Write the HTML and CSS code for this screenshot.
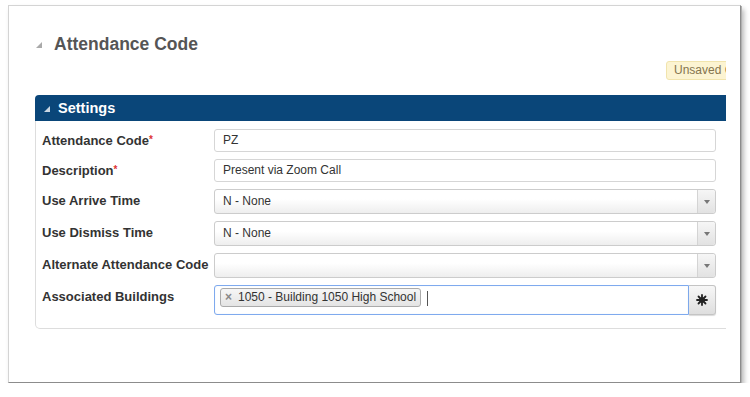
FILE: index.html
```html
<!DOCTYPE html>
<html lang="en-US">

<head>
    <meta charset="utf-8">
    <title>Attendance Code</title>
    <link rel="stylesheet" href="styles.css">
</head>

<body>
    <div class="window">
        <div class="clip">
            <div class="content">
                <h1 class="page-title">
                    <svg class="tri" width="6" height="6" viewBox="0 0 6 6"><polygon points="6,0 6,6 0,6" fill="#aaa"/></svg>
                    Attendance Code
                </h1>
                <div class="badge-row">
                    <span class="badge">Unsaved Changes</span>
                </div>

                <section class="panel">
                    <div class="panel-head">
                        <svg class="tri" width="6" height="6" viewBox="0 0 6 6"><polygon points="6,0 6,6 0,6" fill="#c9d6e3"/></svg>
                        Settings
                    </div>
                    <div class="panel-body">
                        <div class="row">
                            <label>Attendance Code<span class="req">*</span></label>
                            <div class="field text">PZ</div>
                        </div>
                        <div class="row">
                            <label>Description<span class="req">*</span></label>
                            <div class="field text">Present via Zoom Call</div>
                        </div>
                        <div class="row">
                            <label>Use Arrive Time</label>
                            <div class="field select">
                                <span class="value">N - None</span>
                                <span class="arrow"></span>
                            </div>
                        </div>
                        <div class="row">
                            <label>Use Dismiss Time</label>
                            <div class="field select">
                                <span class="value">N - None</span>
                                <span class="arrow"></span>
                            </div>
                        </div>
                        <div class="row">
                            <label>Alternate Attendance Code</label>
                            <div class="field select">
                                <span class="value"></span>
                                <span class="arrow"></span>
                            </div>
                        </div>
                        <div class="row">
                            <label>Associated Buildings</label>
                            <div class="multi">
                                <div class="multi-box">
                                    <span class="tag"><span class="x">&times;</span>1050 - Building 1050 High School</span>
                                    <span class="caret"></span>
                                </div>
                                <button type="button" class="multi-btn">
                                    <svg width="12" height="12" viewBox="0 0 12 12">
                                        <g stroke="#222" stroke-width="1.8" stroke-linecap="round">
                                            <line x1="6" y1="1" x2="6" y2="11"/>
                                            <line x1="1" y1="6" x2="11" y2="6"/>
                                            <line x1="2.5" y1="2.5" x2="9.5" y2="9.5"/>
                                            <line x1="9.5" y1="2.5" x2="2.5" y2="9.5"/>
                                        </g>
                                        <circle cx="6" cy="6" r="2.8" fill="#222"/>
                                    </svg>
                                </button>
                            </div>
                        </div>
                    </div>
                </section>
            </div>
        </div>
    </div>
</body>

</html>
```

FILE: styles.css
```css
html, body {
    margin: 0;
    background: #fff;
}

body {
    font-family: "Liberation Sans", Arial, sans-serif;
    color: #333;
}

/* the screenshot's window frame */
.window {
    margin: 5px 0 0 8px;
    width: 733px;
    height: 378px;
    box-sizing: border-box;
    border: 1px solid #d4d4d4;
    border-right-color: #8c8c8c;
    border-bottom-color: #8c8c8c;
    box-shadow: 1px 1px 0 #b0b0b0, 3px 4px 5px rgba(0, 0, 0, 0.28);
    padding: 26px 0 0 26px;
}

.clip {
    width: 691px;
    overflow: hidden;
}

.content {
    width: 741px;
}

.page-title {
    margin: 0;
    height: 24px;
    line-height: 24px;
    font-size: 17.5px;
    color: #555;
    display: flex;
    align-items: center;
}

.tri {
    display: block;
    margin: 1px 12px 0 1px;
}

.badge-row {
    display: flex;
    justify-content: flex-end;
    margin-top: 5px;
}

.badge {
    width: 110px;
    height: 19px;
    box-sizing: border-box;
    line-height: 17px;
    padding-left: 7px;
    font-size: 12px;
    color: #85754f;
    background: #fcf4d2;
    border: 1px solid #f1e4ad;
    border-radius: 3px;
    white-space: nowrap;
}

.panel {
    margin-top: 15px;
}

.panel-head {
    height: 26px;
    background: #0a4679;
    border-radius: 4px 0 0 0;
    color: #fff;
    font-weight: bold;
    font-size: 14.5px;
    display: flex;
    align-items: center;
    padding-left: 8px;
}

.panel-head .tri {
    margin-right: 8px;
}

.panel-body {
    border: 1px solid #ddd;
    border-top: none;
    border-radius: 0 0 0 5px;
    padding: 8px 0 13px 6px;
    display: grid;
    row-gap: 7px;
}

.row {
    display: flex;
    align-items: flex-start;
}

.row label {
    width: 172px;
    font-size: 13px;
    font-weight: bold;
    line-height: 23px;
    color: #333;
}

.req {
    color: #d33;
    font-size: 10px;
    vertical-align: top;
    position: relative;
    top: -1px;
}

.field {
    width: 502px;
    box-sizing: border-box;
    font-size: 12px;
    color: #333;
    border-radius: 3px;
}

.text {
    height: 23px;
    line-height: 21px;
    border: 1px solid #d6d6d6;
    padding-left: 8px;
    background: #fff;
}

.select {
    height: 25px;
    border: 1px solid #ccc;
    background: linear-gradient(#fff 40%, #eee);
    display: flex;
}

.select .value {
    flex: 1;
    line-height: 23px;
    padding-left: 8px;
}

.select .arrow {
    width: 17px;
    border-left: 1px solid #d4d4d4;
    background: linear-gradient(#f6f6f6, #e2e2e2);
    border-radius: 0 3px 3px 0;
    position: relative;
}

.select .arrow::after {
    content: "";
    position: absolute;
    left: 6px;
    top: 10px;
    border-left: 3px solid transparent;
    border-right: 3px solid transparent;
    border-top: 4px solid #777;
}

.multi {
    display: flex;
    height: 30px;
}

.multi-box {
    width: 475px;
    box-sizing: border-box;
    border: 1px solid #7faaee;
    border-radius: 3px 0 0 3px;
    display: flex;
    align-items: flex-start;
    padding: 2px 0 0 5px;
    box-shadow: inset 0 0 1px rgba(90, 140, 220, 0.3);
}

.tag {
    height: 19px;
    box-sizing: border-box;
    border: 1px solid #aaa;
    border-radius: 3px;
    background: linear-gradient(#f6f6f6, #e4e4e4);
    font-size: 12px;
    line-height: 17px;
    padding: 0 4px 0 17px;
    position: relative;
    color: #333;
}

.tag .x {
    position: absolute;
    left: 4px;
    top: 0;
    color: #888;
    font-weight: bold;
    font-size: 12px;
}

.caret {
    width: 1px;
    height: 15px;
    background: #555;
    margin: 3px 0 0 6px;
}

.multi-btn {
    width: 27px;
    height: 30px;
    margin: 0;
    padding: 0;
    border: 1px solid #c4c4c4;
    border-left: none;
    border-radius: 0 3px 3px 0;
    background: linear-gradient(#f7f7f7, #dedede);
    box-shadow: 0 1px 1px rgba(0, 0, 0, 0.15);
    display: flex;
    align-items: center;
    justify-content: center;
}
```
